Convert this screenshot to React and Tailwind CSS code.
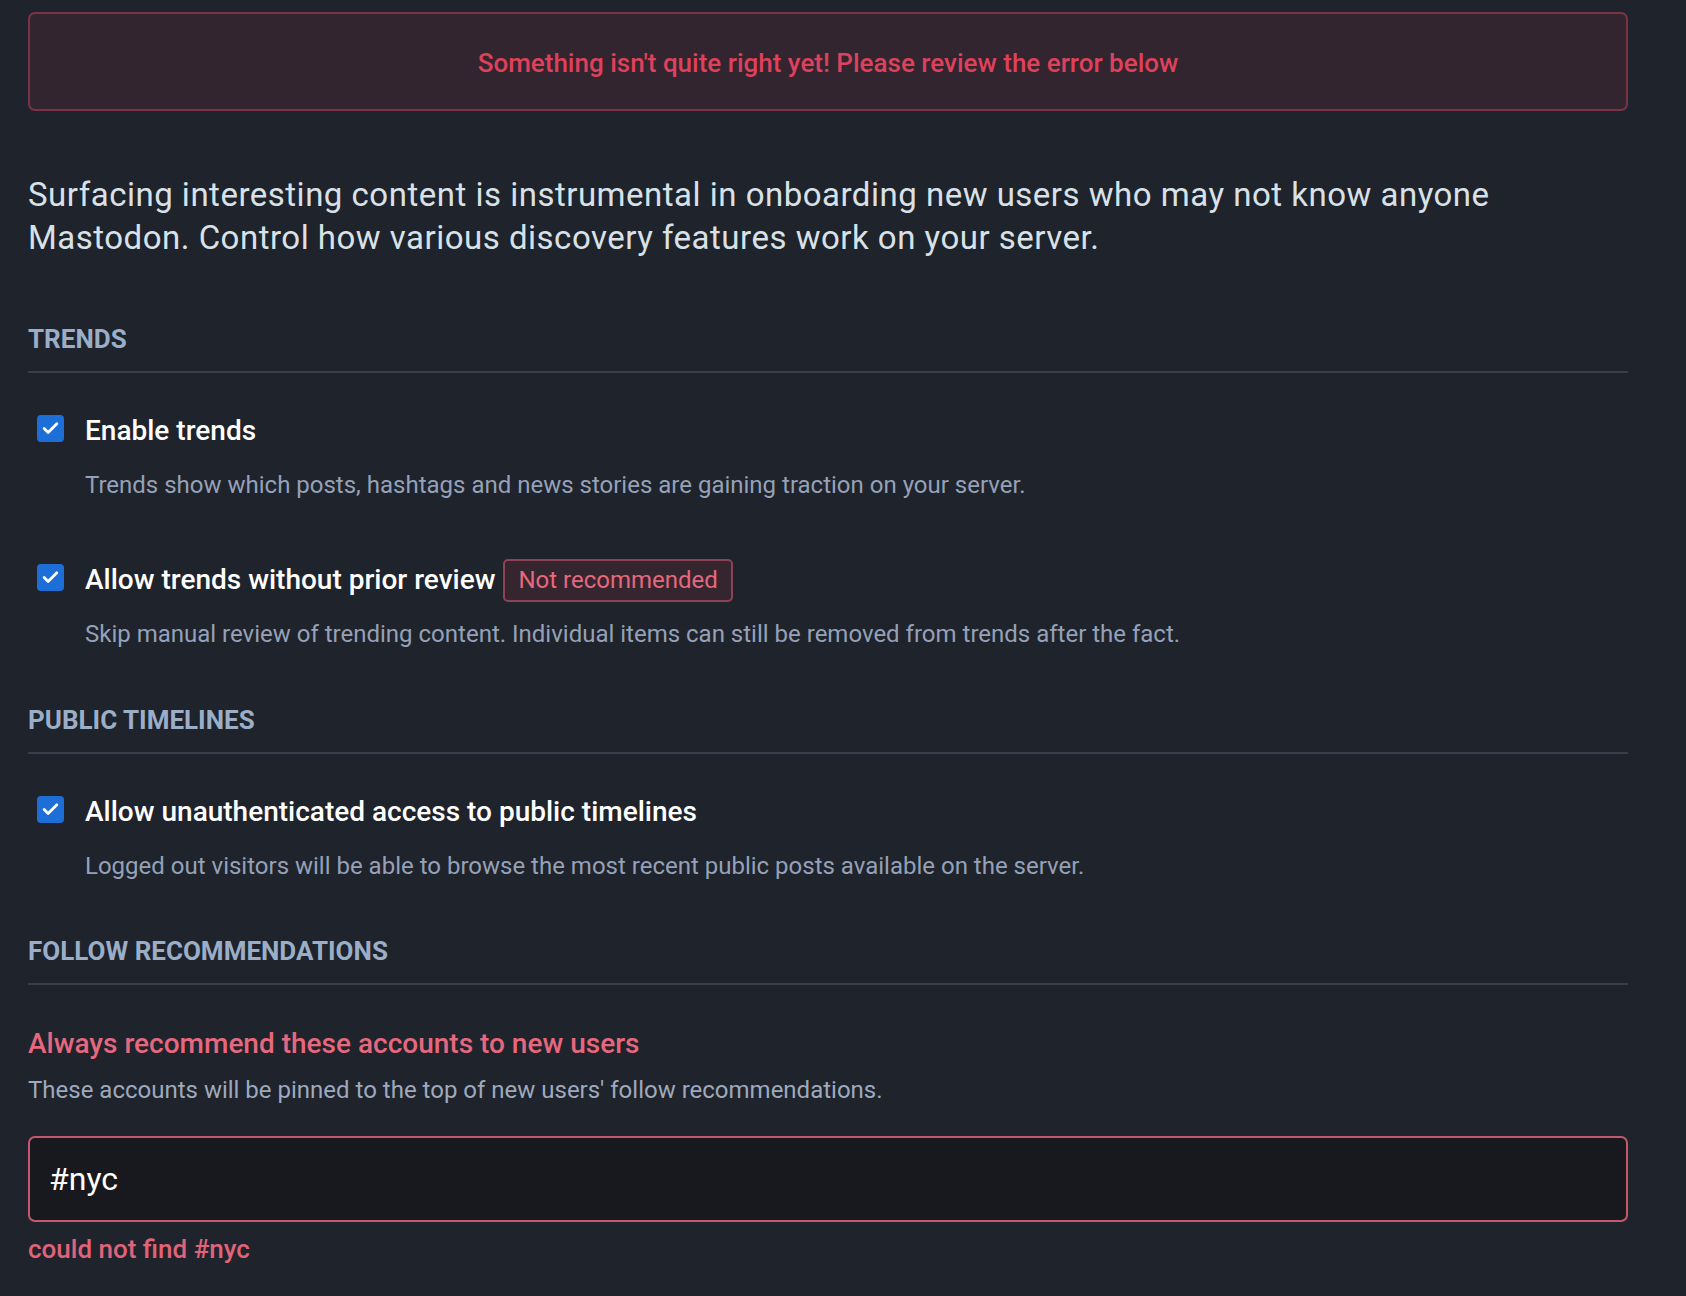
import { Check } from 'lucide-react';

const font = { fontFamily: 'Roboto, "Liberation Sans", sans-serif' };

function CheckRow({ label, hint, badge, className }) {
  return (
    <div className={className}>
      <div className="flex items-center h-[36px]">
        <span className="ml-[9px] mr-[21px] -mt-[6px] flex h-[27px] w-[27px] shrink-0 items-center justify-center rounded-[4px] bg-[#1e6ed8]">
          <Check className="h-[19px] w-[19px] text-white" strokeWidth={3.5} />
        </span>
        <span className="text-[28px] font-medium leading-[36px] text-white">{label}</span>
        {badge && (
          <span className="ml-[8px] -my-[4px] rounded-[5px] border-2 border-[#8e4255] bg-[#35252e] px-[13px] text-[24px] leading-[39px] text-[#e5687e]">
            {badge}
          </span>
        )}
      </div>
      <p className="ml-[57px] mt-[20px] text-[24px] leading-[32px] text-[#95a1b8]">{hint}</p>
    </div>
  );
}

function SectionTitle({ children, className }) {
  return (
    <h4 className={`border-b-2 border-[#393e4d] pb-[15px] text-[26px] font-bold uppercase leading-[34px] text-[#9baec8] ${className}`}>
      {children}
    </h4>
  );
}

export default function App() {
  return (
    <div className="min-h-screen bg-[#1f232b] pt-[12px] pb-[33px]" style={font}>
      <div className="ml-[28px] w-[1600px]">
        {/* error flash */}
        <div className="flex h-[99px] items-center justify-center rounded-[7px] border-2 border-[#7e3246] bg-[#32252f] pt-[3px]">
          <span className="text-[26px] font-medium text-[#df405a]">
            Something isn't quite right yet! Please review the error below
          </span>
        </div>

        <p className="mt-[62px] text-[33px] leading-[43px] tracking-[0.5px] text-[#d9e1e8]">
          Surfacing interesting content is instrumental in onboarding new users who may not know anyone
          <br />
          Mastodon. Control how various discovery features work on your server.
        </p>

        <SectionTitle className="mt-[63px]">Trends</SectionTitle>

        <CheckRow
          className="mt-[40px]"
          label="Enable trends"
          hint="Trends show which posts, hashtags and news stories are gaining traction on your server."
        />
        <CheckRow
          className="mt-[61px]"
          label="Allow trends without prior review"
          badge="Not recommended"
          hint="Skip manual review of trending content. Individual items can still be removed from trends after the fact."
        />

        <SectionTitle className="mt-[53px]">Public timelines</SectionTitle>

        <CheckRow
          className="mt-[40px]"
          label="Allow unauthenticated access to public timelines"
          hint="Logged out visitors will be able to browse the most recent public posts available on the server."
        />

        <SectionTitle className="mt-[52px]">Follow recommendations</SectionTitle>

        <div className="mt-[41px]">
          <label className="block text-[28px] font-medium leading-[36px] text-[#e5687e]">
            Always recommend these accounts to new users
          </label>
          <p className="mt-[12px] text-[24px] leading-[32px] text-[#9ea9bd]">
            These accounts will be pinned to the top of new users' follow recommendations.
          </p>
          <input
            readOnly
            value="#nyc"
            className="mt-[30px] block h-[86px] w-full rounded-[7px] border-2 border-[#c4586c] bg-[#18191e] px-[19px] text-[32px] text-white outline-none"
            style={font}
          />
          <p className="mt-[12px] text-[26px] font-medium leading-[30px] text-[#e0637a]">could not find #nyc</p>
        </div>
      </div>
    </div>
  );
}
